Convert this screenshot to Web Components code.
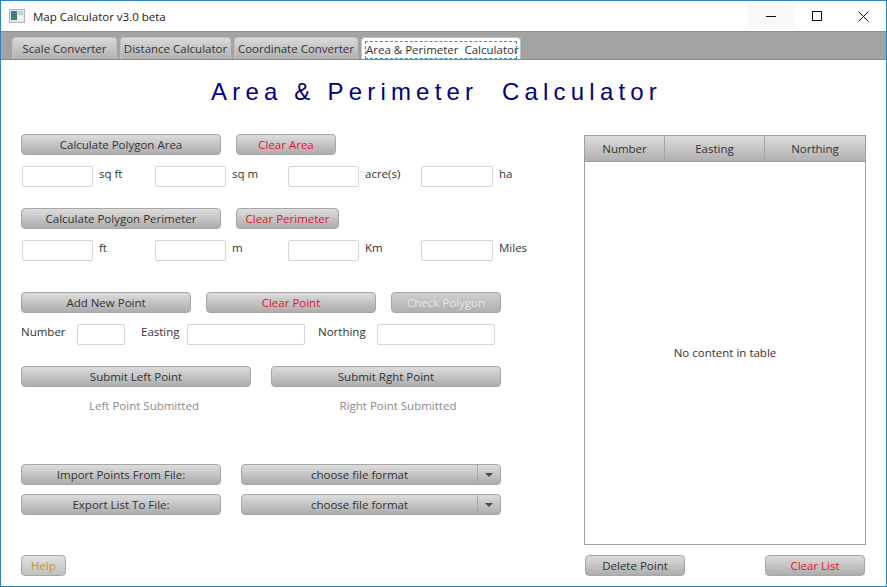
<!DOCTYPE html>
<html>
<head>
<meta charset="utf-8">
<title>Map Calculator v3.0 beta</title>
<style>
  html, body { margin: 0; padding: 0; background: #fff; }
</style>
</head>
<body>
<map-window></map-window>
<script>
const UI_FONT = "'Open Sans', 'Noto Sans', sans-serif";
const UI_SIZE = '11.5px';

class FxButton extends HTMLElement {
    constructor() {
        super();
        this.attachShadow({ mode: 'open' });
        this.shadowRoot.innerHTML = `
        <style>
            :host {
                display: flex;
                align-items: center;
                justify-content: center;
                box-sizing: border-box;
                height: 21px;
                border: 1px solid #a6a6a6;
                border-radius: 4px;
                background: linear-gradient(#dcdcdc, #adadad);
                color: #333;
                font: ${UI_SIZE} ${UI_FONT};
                white-space: nowrap;
            }
            :host([tone="danger"]) { color: #e8112d; }
            :host([tone="muted"]) { color: #e4e4e4; background: linear-gradient(#d0d0d0, #b0b0b0); }
            :host([tone="help"]) { color: #c8982e; background: linear-gradient(#e2e2e2, #c0c0c0); }
        </style>
        <slot></slot>`;
    }
}

class FxField extends HTMLElement {
    constructor() {
        super();
        this.attachShadow({ mode: 'open' });
        this.shadowRoot.innerHTML = `
        <style>
            :host {
                display: block;
                box-sizing: border-box;
                height: 21px;
                border: 1px solid #d6d6d6;
                border-radius: 2px;
                background: #fff;
            }
        </style>`;
    }
}

class UnitField extends HTMLElement {
    constructor() {
        super();
        this.attachShadow({ mode: 'open' });
        this.shadowRoot.innerHTML = `
        <style>
            :host {
                display: flex;
                gap: 6px;
                color: #333;
                font: ${UI_SIZE} ${UI_FONT};
            }
            fx-field { width: var(--field-width, 71px); flex: none; }
            span { line-height: 16px; }
        </style>
        <fx-field></fx-field><span><slot></slot></span>`;
    }
}

class FxCombo extends HTMLElement {
    constructor() {
        super();
        this.attachShadow({ mode: 'open' });
        this.shadowRoot.innerHTML = `
        <style>
            :host {
                display: flex;
                box-sizing: border-box;
                height: 21px;
                border: 1px solid #a6a6a6;
                border-radius: 4px;
                background: linear-gradient(#dcdcdc, #adadad);
                color: #333;
                font: ${UI_SIZE} ${UI_FONT};
            }
            .value { flex: 1; text-align: center; line-height: 19px; }
            .arrow {
                width: 22px;
                border-left: 1px solid #a6a6a6;
                display: flex;
                align-items: center;
                justify-content: center;
            }
            .arrow i {
                border-left: 4px solid transparent;
                border-right: 4px solid transparent;
                border-top: 4px solid #4a4a4a;
            }
        </style>
        <div class="value"><slot></slot></div>
        <div class="arrow"><i></i></div>`;
    }
}

class TitleBar extends HTMLElement {
    constructor() {
        super();
        this.attachShadow({ mode: 'open' });
        this.shadowRoot.innerHTML = `
        <style>
            :host {
                display: flex;
                align-items: center;
                height: 30px;
                background: #fff;
                color: #1a1a1a;
                font: ${UI_SIZE} ${UI_FONT};
            }
            .logo { margin: 0 8px 0 8px; flex: none; }
            .name { flex: 1; }
            .ctl {
                width: 46px;
                height: 22px;
                display: flex;
                align-items: center;
                justify-content: center;
            }
            .ctl.hover { background: #f8f8f8; }
        </style>
        <svg class="logo" width="16" height="14" viewBox="0 0 16 14">
            <rect x="0.5" y="0.5" width="15" height="13" fill="#e8e8e8" stroke="#b4b4b4"/>
            <rect x="2" y="2" width="6" height="9" fill="#3f7f80"/>
            <rect x="9" y="2" width="5" height="4" fill="#c4d0d4"/>
            <rect x="9" y="7" width="5" height="4" fill="#f6f6f6"/>
        </svg>
        <div class="name"><slot></slot></div>
        <div class="ctl hover"><svg width="10" height="10" viewBox="0 0 10 10"><path d="M0 5.5H10" stroke="#111" fill="none"/></svg></div>
        <div class="ctl"><svg width="10" height="10" viewBox="0 0 10 10"><rect x="0.5" y="0.5" width="9" height="9" stroke="#111" fill="none"/></svg></div>
        <div class="ctl"><svg width="11" height="11" viewBox="0 0 11 11"><path d="M0.5 0.5L10.5 10.5M10.5 0.5L0.5 10.5" stroke="#111" fill="none"/></svg></div>`;
    }
}

class TabStrip extends HTMLElement {
    constructor() {
        super();
        this.attachShadow({ mode: 'open' });
        const tabs = [
            ['Scale Converter', 105],
            ['Distance Calculator', 111],
            ['Coordinate Converter', 124],
            ['Area & Perimeter  Calculator', 160]
        ];
        this.shadowRoot.innerHTML = `
        <style>
            :host {
                display: flex;
                align-items: flex-end;
                gap: 3px;
                box-sizing: border-box;
                height: 29px;
                padding-left: 11px;
                background: #a3a3a3;
                border-top: 1px solid #8f8f8f;
                border-bottom: 1px solid #8a8a8a;
                font: ${UI_SIZE} ${UI_FONT};
                color: #333;
            }
            .tab {
                box-sizing: border-box;
                height: 22px;
                border: 1px solid #c2c2c2;
                border-bottom: 0;
                border-radius: 4px 4px 0 0;
                background: linear-gradient(#dadada, #b0b0b0);
                text-align: center;
                line-height: 22px;
                white-space: pre;
            }
            .tab.on { background: #fff; padding: 3px 3px 0 3px; line-height: 16px; }
            .tab.on span {
                display: block;
                height: 18px;
                box-sizing: border-box;
                border: 1px dashed #3a94c8;
                line-height: 16px;
            }
        </style>
        ${tabs.map((t, i) => `<div class="tab ${i === 3 ? 'on' : ''}" style="width:${t[1]}px"><span>${t[0].replace('&', '&amp;')}</span></div>`).join('')}`;
    }
}

class PointTable extends HTMLElement {
    constructor() {
        super();
        this.attachShadow({ mode: 'open' });
        this.shadowRoot.innerHTML = `
        <style>
            :host {
                display: flex;
                flex-direction: column;
                box-sizing: border-box;
                height: 410px;
                border: 1px solid #a0a0a0;
                font: ${UI_SIZE} ${UI_FONT};
                color: #333;
            }
            .head { display: grid; grid-template-columns: 80px 100px 1fr; height: 25px; flex: none; }
            .head div {
                background: linear-gradient(#dcdcdc, #b0b0b0);
                border-right: 1px solid #a6a6a6;
                border-bottom: 1px solid #a0a0a0;
                box-sizing: border-box;
                text-align: center;
                line-height: 25px;
            }
            .head div:last-child { border-right: 0; }
            .empty { flex: 1; display: flex; align-items: center; justify-content: center; }
        </style>
        <div class="head"><div>Number</div><div>Easting</div><div>Northing</div></div>
        <div class="empty"><slot></slot></div>`;
    }
}

class MapWindow extends HTMLElement {
    constructor() {
        super();
        this.attachShadow({ mode: 'open' });
        this.shadowRoot.innerHTML = `
        <style>
            :host {
                display: flex;
                flex-direction: column;
                box-sizing: border-box;
                width: 887px;
                height: 587px;
                border: 1px solid #2b82c4;
                background: #fff;
                color: #333;
                font: ${UI_SIZE} ${UI_FONT};
            }
            h1 {
                margin: 0;
                height: 74px;
                padding: 18px 0 0 210px;
                box-sizing: border-box;
                font: 24px/27px 'Liberation Sans', Arial, sans-serif;
                letter-spacing: 5.2px;
                color: #000080;
                white-space: pre;
            }
            main { flex: 1; display: flex; }
            .left { width: 583px; padding-left: 20px; box-sizing: border-box; flex: none; }
            .row { display: flex; }
            .units { display: grid; grid-template-columns: repeat(4, 133px); padding-left: 1px; margin-top: 11px; }
            .units unit-field:last-child { --field-width: 72px; }
            .right { width: 282px; margin-top: 1px; }
            .right .foot { display: flex; justify-content: space-between; padding: 10px 1px 0; }
            .foot fx-button { width: 100px; }
            .points { align-items: flex-start; margin-top: 11px; }
            .points span { line-height: 16px; }
            .status { display: flex; color: #8a8a8a; margin-top: 11px; height: 16px; line-height: 16px; }
            .status span { text-align: center; }
        </style>
        <title-bar>Map Calculator v3.0 beta</title-bar>
        <tab-strip></tab-strip>
        <h1>Area &amp; Perimeter  Calculator</h1>
        <main>
            <div class="left">
                <div class="row" style="gap:15px">
                    <fx-button style="width:200px">Calculate Polygon Area</fx-button>
                    <fx-button style="width:100px" tone="danger">Clear Area</fx-button>
                </div>
                <div class="units">
                    <unit-field>sq ft</unit-field>
                    <unit-field>sq m</unit-field>
                    <unit-field>acre(s)</unit-field>
                    <unit-field>ha</unit-field>
                </div>

                <div class="row" style="gap:15px;margin-top:21px">
                    <fx-button style="width:200px">Calculate Polygon Perimeter</fx-button>
                    <fx-button style="width:103px" tone="danger">Clear Perimeter</fx-button>
                </div>
                <div class="units">
                    <unit-field>ft</unit-field>
                    <unit-field>m</unit-field>
                    <unit-field>Km</unit-field>
                    <unit-field>Miles</unit-field>
                </div>

                <div class="row" style="gap:15px;margin-top:31px">
                    <fx-button style="width:170px">Add New Point</fx-button>
                    <fx-button style="width:170px" tone="danger">Clear Point</fx-button>
                    <fx-button style="width:110px" tone="muted">Check Polygon</fx-button>
                </div>
                <div class="row points">
                    <span style="width:56px">Number</span>
                    <fx-field style="width:48px"></fx-field>
                    <span style="width:46px;margin-left:16px">Easting</span>
                    <fx-field style="width:118px"></fx-field>
                    <span style="width:59px;margin-left:13px">Northing</span>
                    <fx-field style="width:118px"></fx-field>
                </div>

                <div class="row" style="gap:20px;margin-top:21px">
                    <fx-button style="width:230px">Submit Left Point</fx-button>
                    <fx-button style="width:230px">Submit Rght Point</fx-button>
                </div>
                <div class="status">
                    <span style="width:246px">Left Point Submitted</span>
                    <span style="width:262px">Right Point Submitted</span>
                </div>

                <div class="row" style="gap:20px;margin-top:50px">
                    <fx-button style="width:200px">Import Points From File:</fx-button>
                    <fx-combo style="width:260px">choose file format</fx-combo>
                </div>
                <div class="row" style="gap:20px;margin-top:9px">
                    <fx-button style="width:200px">Export List To File:</fx-button>
                    <fx-combo style="width:260px">choose file format</fx-combo>
                </div>

                <fx-button style="width:45px;margin-top:40px" tone="help">Help</fx-button>
            </div>
            <div class="right">
                <point-table>No content in table</point-table>
                <div class="foot">
                    <fx-button>Delete Point</fx-button>
                    <fx-button tone="danger">Clear List</fx-button>
                </div>
            </div>
        </main>`;
    }
}

customElements.define('fx-button', FxButton);
customElements.define('fx-field', FxField);
customElements.define('unit-field', UnitField);
customElements.define('fx-combo', FxCombo);
customElements.define('title-bar', TitleBar);
customElements.define('tab-strip', TabStrip);
customElements.define('point-table', PointTable);
customElements.define('map-window', MapWindow);
</script>
</body>
</html>
